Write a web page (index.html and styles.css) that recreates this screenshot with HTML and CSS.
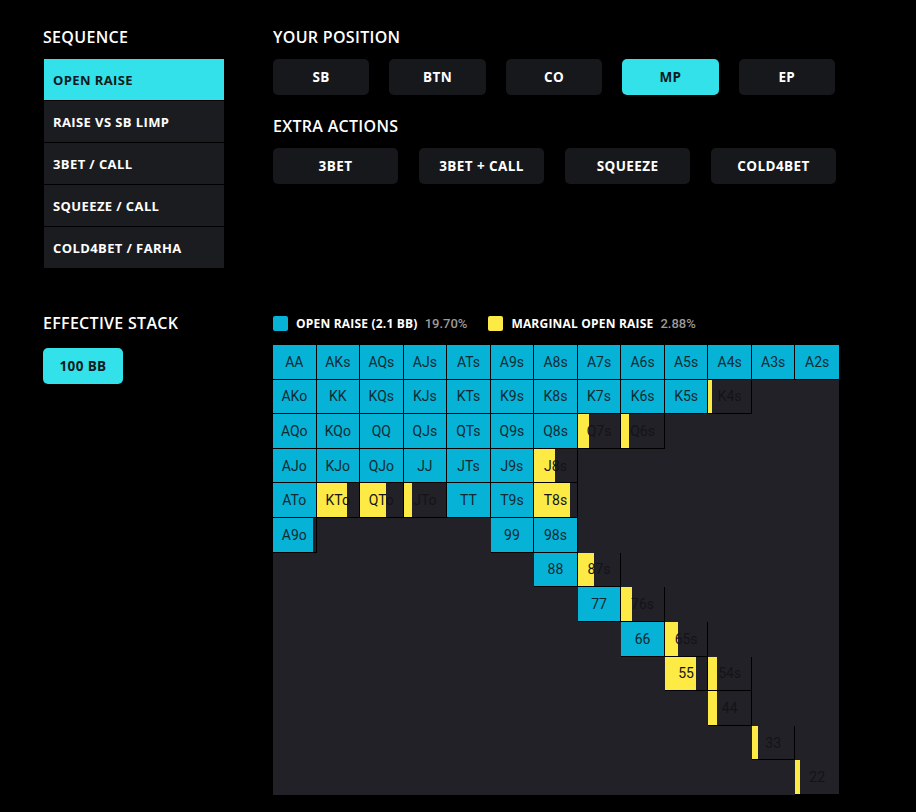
FILE: index.html
```html
<!DOCTYPE html>
<html lang="en">
<head>
<meta charset="utf-8">
<title>Preflop ranges</title>
<link rel="stylesheet" href="styles.css">
</head>
<body>
<div class="page">
  <section class="row top">
    <div class="col-left">
      <h2 class="heading">SEQUENCE</h2>
      <ul class="seq">
        <li class="seq-item active">OPEN RAISE</li>
        <li class="seq-item">RAISE VS SB LIMP</li>
        <li class="seq-item">3BET / CALL</li>
        <li class="seq-item">SQUEEZE / CALL</li>
        <li class="seq-item">COLD4BET / FARHA</li>
      </ul>
    </div>
    <div class="col-right">
      <h2 class="heading">YOUR POSITION</h2>
      <div class="btns five">
        <button class="btn">SB</button>
        <button class="btn">BTN</button>
        <button class="btn">CO</button>
        <button class="btn active">MP</button>
        <button class="btn">EP</button>
      </div>
      <h2 class="heading extra">EXTRA ACTIONS</h2>
      <div class="btns four">
        <button class="btn">3BET</button>
        <button class="btn">3BET + CALL</button>
        <button class="btn">SQUEEZE</button>
        <button class="btn">COLD4BET</button>
      </div>
    </div>
  </section>

  <section class="row bottom">
    <div class="col-left">
      <h2 class="heading stack-h">EFFECTIVE STACK</h2>
      <button class="btn active stack">100 BB</button>
    </div>
    <div class="col-right">
      <div class="legend">
        <span class="sw sw-blue"></span>
        <span class="lg-label">OPEN RAISE (2.1 BB)</span>
        <span class="lg-pct">19.70%</span>
        <span class="sw sw-yellow"></span>
        <span class="lg-label">MARGINAL OPEN RAISE</span>
        <span class="lg-pct">2.88%</span>
      </div>
      <div class="grid">
        <!-- row A -->
        <div class="c r">AA</div><div class="c r">AKs</div><div class="c r">AQs</div><div class="c r">AJs</div><div class="c r">ATs</div><div class="c r">A9s</div><div class="c r">A8s</div><div class="c r">A7s</div><div class="c r">A6s</div><div class="c r">A5s</div><div class="c r">A4s</div><div class="c r">A3s</div><div class="c r">A2s</div>
        <!-- row K -->
        <div class="c r">AKo</div><div class="c r">KK</div><div class="c r">KQs</div><div class="c r">KJs</div><div class="c r">KTs</div><div class="c r">K9s</div><div class="c r">K8s</div><div class="c r">K7s</div><div class="c r">K6s</div><div class="c r">K5s</div><div class="c m" style="--p:9%">K4s</div><div class="c f"></div><div class="c f"></div>
        <!-- row Q -->
        <div class="c r">AQo</div><div class="c r">KQo</div><div class="c r">QQ</div><div class="c r">QJs</div><div class="c r">QTs</div><div class="c r">Q9s</div><div class="c r">Q8s</div><div class="c m" style="--p:25%">Q7s</div><div class="c m" style="--p:19%">Q6s</div><div class="c f"></div><div class="c f"></div><div class="c f"></div><div class="c f"></div>
        <!-- row J -->
        <div class="c r">AJo</div><div class="c r">KJo</div><div class="c r">QJo</div><div class="c r">JJ</div><div class="c r">JTs</div><div class="c r">J9s</div><div class="c m" style="--p:49%">J8s</div><div class="c f"></div><div class="c f"></div><div class="c f"></div><div class="c f"></div><div class="c f"></div><div class="c f"></div>
        <!-- row T -->
        <div class="c r">ATo</div><div class="c m" style="--p:72%">KTo</div><div class="c m" style="--p:60%">QTo</div><div class="c m" style="--p:19%">JTo</div><div class="c r">TT</div><div class="c r">T9s</div><div class="c m" style="--p:83%">T8s</div><div class="c f"></div><div class="c f"></div><div class="c f"></div><div class="c f"></div><div class="c f"></div><div class="c f"></div>
        <!-- row 9 -->
        <div class="c rp" style="--p:92%">A9o</div><div class="c f"></div><div class="c f"></div><div class="c f"></div><div class="c f"></div><div class="c r">99</div><div class="c r">98s</div><div class="c f"></div><div class="c f"></div><div class="c f"></div><div class="c f"></div><div class="c f"></div><div class="c f"></div>
        <!-- row 8 -->
        <div class="c f"></div><div class="c f"></div><div class="c f"></div><div class="c f"></div><div class="c f"></div><div class="c f"></div><div class="c r">88</div><div class="c m" style="--p:37%">87s</div><div class="c f"></div><div class="c f"></div><div class="c f"></div><div class="c f"></div><div class="c f"></div>
        <!-- row 7 -->
        <div class="c f"></div><div class="c f"></div><div class="c f"></div><div class="c f"></div><div class="c f"></div><div class="c f"></div><div class="c f"></div><div class="c r">77</div><div class="c m" style="--p:25%">76s</div><div class="c f"></div><div class="c f"></div><div class="c f"></div><div class="c f"></div>
        <!-- row 6 -->
        <div class="c f"></div><div class="c f"></div><div class="c f"></div><div class="c f"></div><div class="c f"></div><div class="c f"></div><div class="c f"></div><div class="c f"></div><div class="c r">66</div><div class="c m" style="--p:30%">65s</div><div class="c f"></div><div class="c f"></div><div class="c f"></div>
        <!-- row 5 -->
        <div class="c f"></div><div class="c f"></div><div class="c f"></div><div class="c f"></div><div class="c f"></div><div class="c f"></div><div class="c f"></div><div class="c f"></div><div class="c f"></div><div class="c m" style="--p:74%">55</div><div class="c m" style="--p:20%">54s</div><div class="c f"></div><div class="c f"></div>
        <!-- row 4 -->
        <div class="c f"></div><div class="c f"></div><div class="c f"></div><div class="c f"></div><div class="c f"></div><div class="c f"></div><div class="c f"></div><div class="c f"></div><div class="c f"></div><div class="c f"></div><div class="c m" style="--p:21%">44</div><div class="c f"></div><div class="c f"></div>
        <!-- row 3 -->
        <div class="c f"></div><div class="c f"></div><div class="c f"></div><div class="c f"></div><div class="c f"></div><div class="c f"></div><div class="c f"></div><div class="c f"></div><div class="c f"></div><div class="c f"></div><div class="c f"></div><div class="c m" style="--p:14%">33</div><div class="c f"></div>
        <!-- row 2 -->
        <div class="c f"></div><div class="c f"></div><div class="c f"></div><div class="c f"></div><div class="c f"></div><div class="c f"></div><div class="c f"></div><div class="c f"></div><div class="c f"></div><div class="c f"></div><div class="c f"></div><div class="c f"></div><div class="c m" style="--p:12%">22</div>
      </div>
    </div>
  </section>
</div>
</body>
</html>
```

FILE: styles.css
```css
* { box-sizing: border-box; }

html, body {
  margin: 0;
  padding: 0;
  background: #000;
}

body {
  font-family: "Open Sans", "Liberation Sans", sans-serif;
  color: #fff;
}

.page {
  padding: 28px 0 0 44px;
}

.row {
  display: grid;
  grid-template-columns: 180px 566px;
  column-gap: 49px;
}

.bottom {
  margin-top: 46px;
}

.heading {
  margin: 0 0 13px;
  font-size: 16px;
  line-height: 18px;
  font-weight: 600;
  letter-spacing: 0.3px;
  color: #fff;
}

.col-left .heading { margin-left: -1px; }

.heading.extra { margin-top: 22px; }
.heading.stack-h { margin-bottom: 16px; }

.seq {
  list-style: none;
  margin: 2px 0 0;
  padding: 0;
  display: flex;
  flex-direction: column;
  gap: 1px;
}

.seq-item {
  height: 41px;
  display: flex;
  align-items: center;
  padding-left: 9px;
  background: #1b1c1f;
  font-size: 13px;
  font-weight: 700;
  letter-spacing: 0.4px;
  color: #fff;
}

.seq-item.active {
  background: #33e1ea;
  color: #0f1b20;
}

.btns {
  display: grid;
  gap: 20px;
}

.btns.five {
  grid-template-columns: repeat(5, 1fr);
  width: 562px;
}

.btns.four {
  grid-template-columns: repeat(4, 1fr);
  width: 563px;
  gap: 21px;
}

.btn {
  height: 36px;
  border: 0;
  border-radius: 5px;
  background: #17181b;
  color: #fff;
  font-family: "Open Sans", "Liberation Sans", sans-serif;
  font-size: 13.5px;
  font-weight: 700;
  letter-spacing: 0.4px;
  padding: 0;
}

.btn.active {
  background: #33e1ea;
  color: #0f1b20;
}

.btn.stack {
  width: 80px;
  margin-left: -1px;
  display: block;
}

.legend {
  height: 18px;
  margin: 0 0 13px;
  display: flex;
  align-items: center;
}

.sw {
  width: 15px;
  height: 15px;
  border-radius: 2px;
  margin-right: 8px;
}

.sw-blue { background: #06b2d6; }
.sw-yellow { background: #fdea45; margin-left: 21px; }

.lg-label {
  font-size: 12px;
  font-weight: 700;
  letter-spacing: 0.2px;
  color: #fff;
  margin-right: 7px;
}

.lg-pct {
  font-family: Roboto, "Liberation Sans", sans-serif;
  font-size: 13px;
  font-weight: 500;
  color: #9b9b9b;
}

.grid {
  width: 566px;
  height: 450px;
  display: grid;
  grid-template-columns: repeat(13, 1fr);
  grid-template-rows: repeat(13, 1fr);
  background: #222127;
}

.c {
  display: flex;
  align-items: center;
  justify-content: center;
  font-family: Roboto, "Liberation Sans", sans-serif;
  font-size: 14px;
  color: #0f2a33;
  border-right: 1px solid #000;
  border-bottom: 1px solid #000;
}

.c:nth-child(13n) { border-right: 0; }

.c.r { background: #06b2d6; }

.c.rp {
  background: linear-gradient(to right, #06b2d6 var(--p), #222127 var(--p));
}

.c.m {
  background: linear-gradient(to right, #fdea45 var(--p), #222127 var(--p));
  color: #141418;
}

.c.f {
  border: 0;
}
```
